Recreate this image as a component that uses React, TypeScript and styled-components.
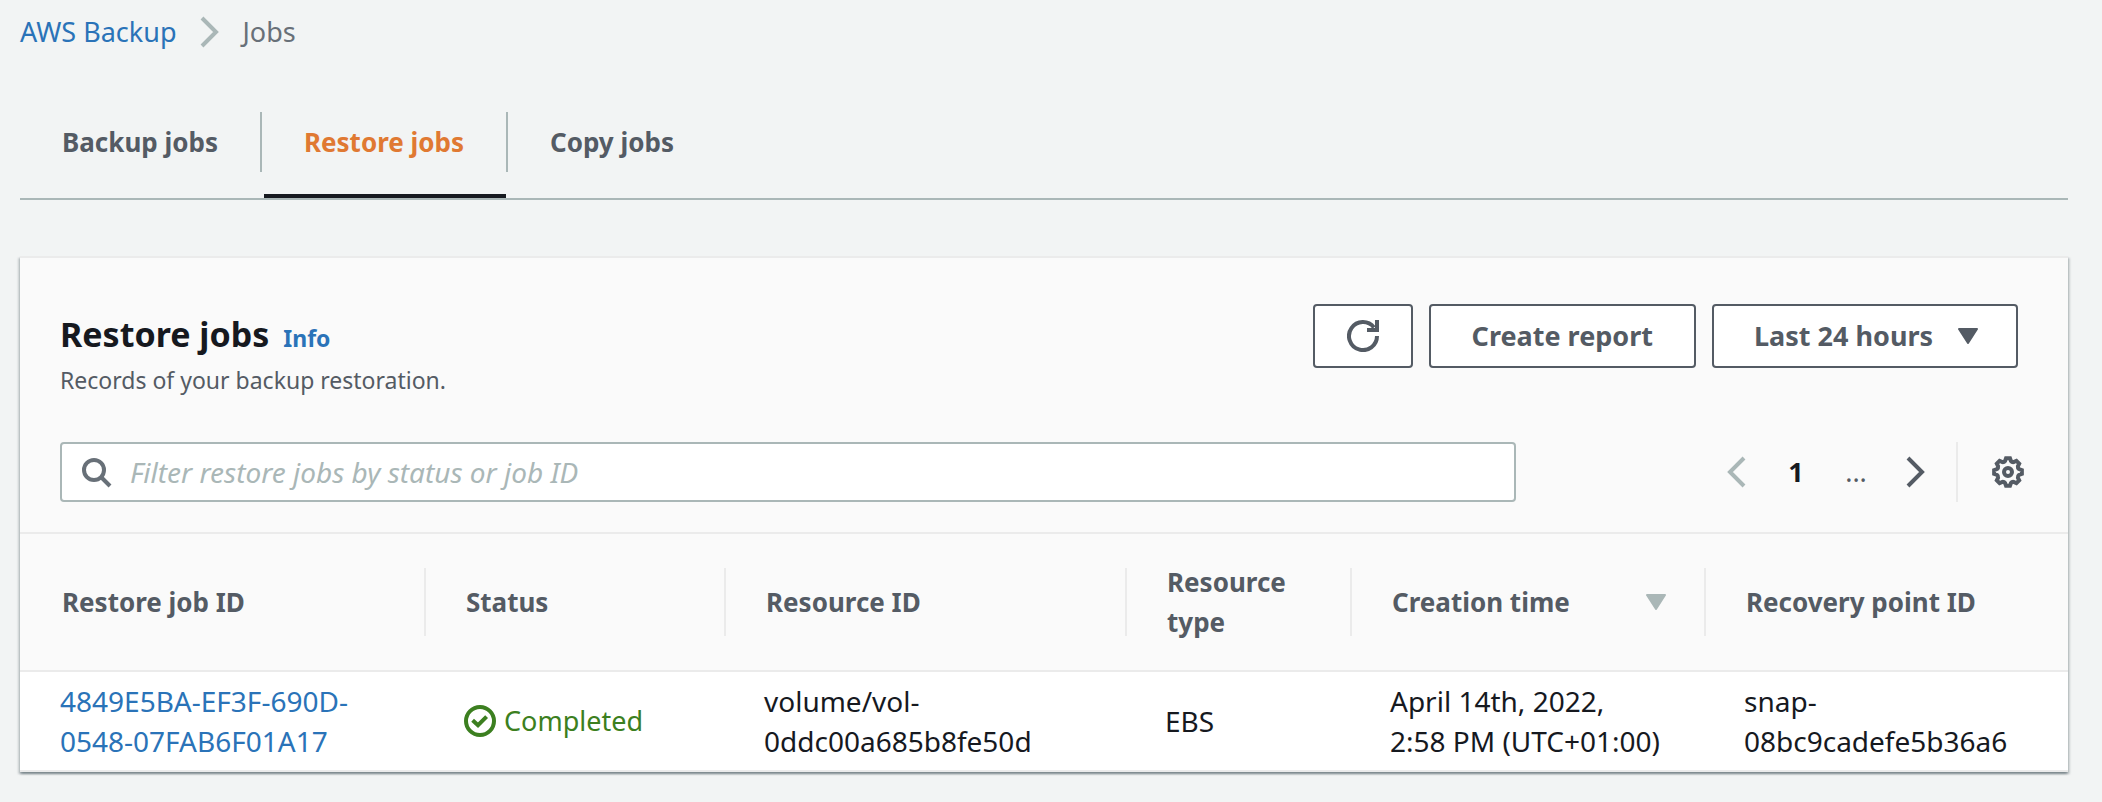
import React from "react";
import styled, { createGlobalStyle } from "styled-components";

const color = {
  page: "#f2f4f4",
  surface: "#fafafa",
  white: "#ffffff",
  line: "#ebebeb",
  muted: "#aab7b7",
  label: "#545b64",
  icon: "#687078",
  text: "#16191f",
  link: "#2a73b8",
  accent: "#e07932",
  success: "#3c7f20",
};

const GlobalStyle = createGlobalStyle`
  *, *::before, *::after { box-sizing: border-box; }
  body {
    margin: 0;
    background: ${color.page};
    color: ${color.text};
    font-family: "Noto Sans", "Open Sans", sans-serif;
    font-size: 28px;
    line-height: 40px;
  }
  button, input, select { font: inherit; color: inherit; }
`;

const Page = styled.div`
  padding: 12px 34px 28px 20px;
`;

const Link = styled.a`
  color: ${color.link};
  text-decoration: none;
`;

const Breadcrumbs = styled.ol`
  display: flex;
  align-items: center;
  gap: 17px;
  margin: 0;
  padding: 0;
  list-style: none;
  font-size: 27px;
  color: ${color.icon};
`;

const Crumb = styled.li`
  display: flex;
  align-items: center;
  gap: 17px;
`;

const Icon = styled.svg<{ $tone?: string }>`
  display: block;
  flex: none;
  fill: none;
  stroke: ${(p) => p.$tone ?? color.label};
  stroke-width: 4;
`;

const Caret = styled.svg<{ $tone?: string }>`
  display: block;
  flex: none;
  fill: ${(p) => p.$tone ?? color.label};
  stroke: ${(p) => p.$tone ?? color.label};
  stroke-width: 2;
  stroke-linejoin: round;
  pointer-events: none;
`;

const TabList = styled.div`
  display: flex;
  margin-top: 60px;
  border-bottom: 2px solid ${color.muted};
`;

const Tab = styled.button<{ $active?: boolean }>`
  display: flex;
  flex-direction: column;
  gap: 22px;
  padding: 0;
  border: 0;
  background: none;
  font-size: 26px;
  font-weight: 700;
  color: ${(p) => (p.$active ? color.accent : color.label)};

  &::after {
    content: "";
    align-self: stretch;
    height: 4px;
    margin: 0 2px;
    background: ${(p) => (p.$active ? color.text : "transparent")};
  }
`;

const TabLabel = styled.span<{ $last?: boolean }>`
  padding: 10px 42px;
  border-right: 2px solid ${(p) => (p.$last ? "transparent" : color.muted)};
`;

const Panel = styled.section`
  margin-top: 56px;
  border-top: 2px solid ${color.line};
  background: ${color.surface};
  box-shadow:
    0 2px 2px rgba(0, 28, 36, 0.3),
    2px 2px 2px rgba(0, 28, 36, 0.15),
    -2px 2px 2px rgba(0, 28, 36, 0.15);
`;

const PanelHeader = styled.header`
  padding: 46px 40px 30px;
`;

const TitleRow = styled.div`
  display: flex;
  justify-content: space-between;
  align-items: flex-start;
`;

const TitleBlock = styled.div`
  padding-top: 6px;
`;

const Title = styled.h2`
  margin: 0;
  font-size: 34px;
  line-height: 48px;
`;

const InfoLink = styled(Link)`
  margin-left: 14px;
  font-size: 23px;
  font-weight: 700;
`;

const TitleLine = styled.div`
  display: flex;
  align-items: baseline;
`;

const Description = styled.p`
  margin: 2px 0 0;
  font-size: 23px;
  color: ${color.label};
`;

const Actions = styled.div`
  display: flex;
  gap: 16px;
  margin-right: 10px;
`;

const ActionButton = styled.button`
  height: 64px;
  padding: 0 41px;
  border: 2px solid ${color.label};
  border-radius: 4px;
  background: ${color.white};
  color: ${color.label};
  font-size: 27px;
  font-weight: 700;
`;

const IconButton = styled(ActionButton)`
  padding: 0 32px;
`;

const RangePicker = styled.label`
  display: grid;
  align-items: center;

  & > * { grid-area: 1 / 1; }
  & > svg { justify-self: end; margin-right: 40px; }
`;

const RangeSelect = styled.select`
  height: 64px;
  padding: 0 82px 0 40px;
  border: 2px solid ${color.label};
  border-radius: 4px;
  background: ${color.white};
  color: ${color.label};
  font-size: 27px;
  font-weight: 700;
  appearance: none;
`;

const FilterRow = styled.div`
  display: flex;
  align-items: center;
  justify-content: space-between;
  margin-top: 42px;
`;

const SearchBox = styled.label`
  display: flex;
  align-items: center;
  gap: 18px;
  width: 74%;
  height: 60px;
  padding: 0 18px;
  border: 2px solid ${color.muted};
  border-radius: 4px;
  background: ${color.white};
`;

const SearchInput = styled.input`
  flex: 1;
  min-width: 0;
  padding: 0;
  border: 0;
  outline: 0;
  background: none;

  &::placeholder {
    color: ${color.muted};
    font-style: italic;
    opacity: 1;
  }
`;

const TableTools = styled.div`
  display: flex;
  align-items: center;
`;

const Pagination = styled.nav`
  display: grid;
  grid-template-columns: repeat(4, 60px);
  margin-right: 10px;
`;

const PageButton = styled.button<{ $current?: boolean }>`
  display: grid;
  place-items: center;
  height: 60px;
  padding: 0;
  border: 0;
  background: none;
  font-size: 27px;
  font-weight: ${(p) => (p.$current ? 700 : 400)};
`;

const PageGap = styled.span`
  display: grid;
  place-items: center;
  font-size: 27px;
  color: ${color.label};
`;

const SettingsButton = styled.button`
  height: 60px;
  padding: 0 4px 0 34px;
  border: 0;
  border-left: 2px solid ${color.line};
  background: none;
`;

const Table = styled.table`
  width: 100%;
  border-top: 2px solid ${color.line};
  border-spacing: 0;
  table-layout: fixed;
`;

const Column = styled.col<{ $width?: number }>`
  width: ${(p) => (p.$width ? `${p.$width}px` : "auto")};
`;

const HeadCell = styled.th`
  padding: 34px 0;
  border-bottom: 2px solid ${color.line};
  text-align: left;
  font-size: 26px;
  color: ${color.label};
`;

const HeadContent = styled.div<{ $first?: boolean; $last?: boolean }>`
  display: flex;
  align-items: center;
  justify-content: space-between;
  height: 68px;
  padding: 0 38px 0 ${(p) => (p.$first ? 42 : 40)}px;
  border-right: 2px solid ${(p) => (p.$last ? "transparent" : color.line)};
`;

const Cell = styled.td`
  padding: 9px 38px;
  border-bottom: 2px solid ${color.line};
  background: ${color.white};

  &:first-child { padding-left: 40px; }
`;

const Unbroken = styled.span`
  white-space: nowrap;
`;

const Status = styled.span`
  display: flex;
  align-items: center;
  gap: 8px;
  font-size: 27px;
  color: ${color.success};
`;

const ChevronRight = ({ tone }: { tone?: string }) => (
  <Icon $tone={tone} width="32" height="32" viewBox="0 0 32 32" aria-hidden="true">
    <path d="M8 2 22 16 8 30" />
  </Icon>
);

const ChevronLeft = ({ tone }: { tone?: string }) => (
  <Icon $tone={tone} width="32" height="32" viewBox="0 0 32 32" aria-hidden="true">
    <path d="M24 2 10 16 24 30" />
  </Icon>
);

const RefreshIcon = () => (
  <Icon width="32" height="32" viewBox="0 0 32 32" aria-hidden="true">
    <path d="M30 16A14 14 0 1 1 27 7.4" />
    <path d="M30 0V10H20" />
  </Icon>
);

const SearchIcon = () => (
  <Icon $tone={color.icon} width="32" height="32" viewBox="0 0 32 32" aria-hidden="true">
    <circle cx="14" cy="14" r="10" />
    <path d="M21 21 30 30" />
  </Icon>
);

const CheckIcon = () => (
  <Icon $tone={color.success} width="32" height="32" viewBox="0 0 32 32" aria-hidden="true">
    <circle cx="16" cy="16" r="14" />
    <path d="M8.6 15.2 14 20.2 22.6 11.6" />
  </Icon>
);

// Eight teeth, each with a flat tip at radius 14 and a rounded valley after it.
const gearPath = Array.from({ length: 8 }, (_, i) => {
  const point = (deg: number, r: number) => {
    const a = ((i * 45 + deg) * Math.PI) / 180;
    return `${(16 + r * Math.sin(a)).toFixed(2)} ${(16 - r * Math.cos(a)).toFixed(2)}`;
  };
  return `${i ? "L" : "M"}${point(-8, 14)}L${point(8, 14)}L${point(15, 11.4)}Q${point(22.5, 10.4)} ${point(30, 11.4)}`;
}).join("");

const GearIcon = () => (
  <Icon width="32" height="32" viewBox="0 0 32 32" aria-hidden="true">
    <path d={`${gearPath}Z`} />
    <circle cx="16" cy="16" r="4" />
  </Icon>
);

const CaretDown = ({ tone }: { tone?: string }) => (
  <Caret $tone={tone} width="20" height="16" viewBox="0 0 20 16" aria-hidden="true">
    <path d="M1 1H19L10 15Z" />
  </Caret>
);

const tabs = ["Backup jobs", "Restore jobs", "Copy jobs"];
const activeTab = "Restore jobs";

const columns = [
  { name: "Restore job ID", width: 406 },
  { name: "Status", width: 300 },
  { name: "Resource ID", width: 401 },
  { name: "Resource type", width: 225 },
  { name: "Creation time", width: 354, sortable: true },
  { name: "Recovery point ID" },
];

const jobs = [
  {
    id: "4849E5BA-EF3F-690D-0548-07FAB6F01A17",
    status: "Completed",
    resource: "volume/vol-0ddc00a685b8fe50d",
    type: "EBS",
    date: "April 14th, 2022,",
    time: "2:58 PM (UTC+01:00)",
    recoveryPoint: "snap-08bc9cadefe5b36a6",
  },
];

export default function App() {
  return (
    <>
      <GlobalStyle />
      <Page>
        <nav aria-label="Breadcrumbs">
          <Breadcrumbs>
            <Crumb>
              <Link href="#backup">AWS Backup</Link>
              <ChevronRight tone={color.muted} />
            </Crumb>
            <Crumb aria-current="page">Jobs</Crumb>
          </Breadcrumbs>
        </nav>

        <TabList role="tablist">
          {tabs.map((tab, i) => (
            <Tab key={tab} type="button" role="tab" aria-selected={tab === activeTab} $active={tab === activeTab}>
              <TabLabel $last={i === tabs.length - 1}>{tab}</TabLabel>
            </Tab>
          ))}
        </TabList>

        <Panel>
          <PanelHeader>
            <TitleRow>
              <TitleBlock>
                <TitleLine>
                  <Title>Restore jobs</Title>
                  <InfoLink href="#info">Info</InfoLink>
                </TitleLine>
                <Description>Records of your backup restoration.</Description>
              </TitleBlock>
              <Actions>
                <IconButton type="button" aria-label="Refresh">
                  <RefreshIcon />
                </IconButton>
                <ActionButton type="button">Create report</ActionButton>
                <RangePicker>
                  <RangeSelect aria-label="Time range">
                    <option>Last 24 hours</option>
                  </RangeSelect>
                  <CaretDown />
                </RangePicker>
              </Actions>
            </TitleRow>

            <FilterRow>
              <SearchBox>
                <SearchIcon />
                <SearchInput
                  type="text"
                  aria-label="Filter restore jobs"
                  placeholder="Filter restore jobs by status or job ID"
                />
              </SearchBox>
              <TableTools>
                <Pagination aria-label="Pagination">
                  <PageButton type="button" aria-label="Previous page" disabled>
                    <ChevronLeft tone={color.muted} />
                  </PageButton>
                  <PageButton type="button" $current aria-current="page">
                    1
                  </PageButton>
                  <PageGap>...</PageGap>
                  <PageButton type="button" aria-label="Next page">
                    <ChevronRight />
                  </PageButton>
                </Pagination>
                <SettingsButton type="button" aria-label="Table settings">
                  <GearIcon />
                </SettingsButton>
              </TableTools>
            </FilterRow>
          </PanelHeader>

          <Table>
            <colgroup>
              {columns.map((c) => (
                <Column key={c.name} $width={c.width} />
              ))}
            </colgroup>
            <thead>
              <tr>
                {columns.map((c, i) => (
                  <HeadCell key={c.name} scope="col">
                    <HeadContent $first={i === 0} $last={i === columns.length - 1}>
                      {c.name}
                      {c.sortable && <CaretDown tone={color.muted} />}
                    </HeadContent>
                  </HeadCell>
                ))}
              </tr>
            </thead>
            <tbody>
              {jobs.map((job) => (
                <tr key={job.id}>
                  <Cell>
                    <Link href="#job">{job.id}</Link>
                  </Cell>
                  <Cell>
                    <Status>
                      <CheckIcon />
                      {job.status}
                    </Status>
                  </Cell>
                  <Cell>{job.resource}</Cell>
                  <Cell>{job.type}</Cell>
                  <Cell>
                    {job.date} <Unbroken>{job.time}</Unbroken>
                  </Cell>
                  <Cell>{job.recoveryPoint}</Cell>
                </tr>
              ))}
            </tbody>
          </Table>
        </Panel>
      </Page>
    </>
  );
}
